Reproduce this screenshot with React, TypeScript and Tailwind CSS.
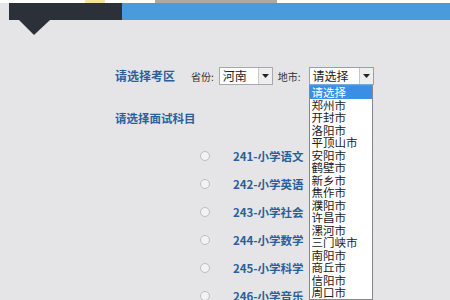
const cities = [
  '请选择',
  '郑州市',
  '开封市',
  '洛阳市',
  '平顶山市',
  '安阳市',
  '鹤壁市',
  '新乡市',
  '焦作市',
  '濮阳市',
  '许昌市',
  '漯河市',
  '三门峡市',
  '南阳市',
  '商丘市',
  '信阳市',
  '周口市',
];

const subjects = ['241-小学语文', '242-小学英语', '243-小学社会', '244-小学数学', '245-小学科学', '246-小学音乐'];

const font = { fontFamily: '"Noto Sans CJK SC", "Liberation Sans", sans-serif' };

function Arrow() {
  return (
    <div className="flex h-full w-[14px] items-center justify-center border-l border-[#c8c8c8] bg-[#eeeeee]">
      <svg width="7" height="4" viewBox="0 0 7 4">
        <path d="M0 0h7L3.5 4z" fill="#222" />
      </svg>
    </div>
  );
}

export default function App() {
  return (
    <div className="relative h-[300px] w-[450px] overflow-hidden bg-[#e5e5e7]" style={font}>
      <div className="flex h-[3px] bg-white">
        <div className="ml-[85px] w-[20px] bg-[#f3e3a0]" />
        <div className="ml-[50px] w-[122px] bg-[#a9a9a9]" />
      </div>
      <div className="flex h-[17px] pl-[9px]">
        <div className="w-[113px] bg-[#2c3038]" />
        <div className="flex-1 bg-[#4a9bdc]" />
      </div>
      <svg className="ml-[19px]" width="31" height="15" viewBox="0 0 31 15">
        <path d="M0 0h31L15 15z" fill="#2c3038" />
      </svg>

      <div className="ml-[115px] mt-[32px] flex items-center">
        <span className="w-[60px] text-[12px] font-bold text-[#2b5f9c]">请选择考区</span>
        <span className="ml-[16px] text-[10px] text-[#333]">省份:</span>
        <div className="ml-[5px] flex h-[18px] w-[54px] items-center border border-[#a8a8a8] bg-white">
          <span className="flex-1 pl-[3px] text-[12px] leading-none text-[#222]">河南</span>
          <Arrow />
        </div>
        <span className="ml-[5px] text-[10px] text-[#333]">地市:</span>
        <div className="relative ml-[8px] flex h-[18px] w-[65px] items-center border border-[#7aa7d8] bg-white">
          <span className="flex-1 pl-[3px] text-[12px] leading-none text-[#222]">请选择</span>
          <Arrow />
          <div className="absolute left-[-1px] top-[17px] w-[64px] border border-[#888] bg-white">
            {cities.map((c, i) => (
              <div
                key={c}
                className={
                  i === 0
                    ? 'h-[12.5px] bg-[#3a8ee6] pl-[2px] text-[11.5px] leading-[12.5px] text-white'
                    : 'h-[12.5px] pl-[2px] text-[11.5px] leading-[12.5px] text-[#222]'
                }
              >
                {c}
              </div>
            ))}
          </div>
        </div>
      </div>

      <div className="ml-[115px] mt-[25px] text-[11.5px] font-bold text-[#2b5f9c]">请选择面试科目</div>

      <div className="ml-[200px] mt-[21px] flex flex-col gap-[12px]">
        {subjects.map((s) => (
          <div key={s} className="flex h-[16px] items-center">
            <span className="h-[10px] w-[10px] rounded-full border border-[#bdbdbd] bg-[#f2f2f2]" />
            <span className="ml-[23px] text-[11.5px] font-bold text-[#2b5f9c]">{s}</span>
          </div>
        ))}
      </div>
    </div>
  );
}
